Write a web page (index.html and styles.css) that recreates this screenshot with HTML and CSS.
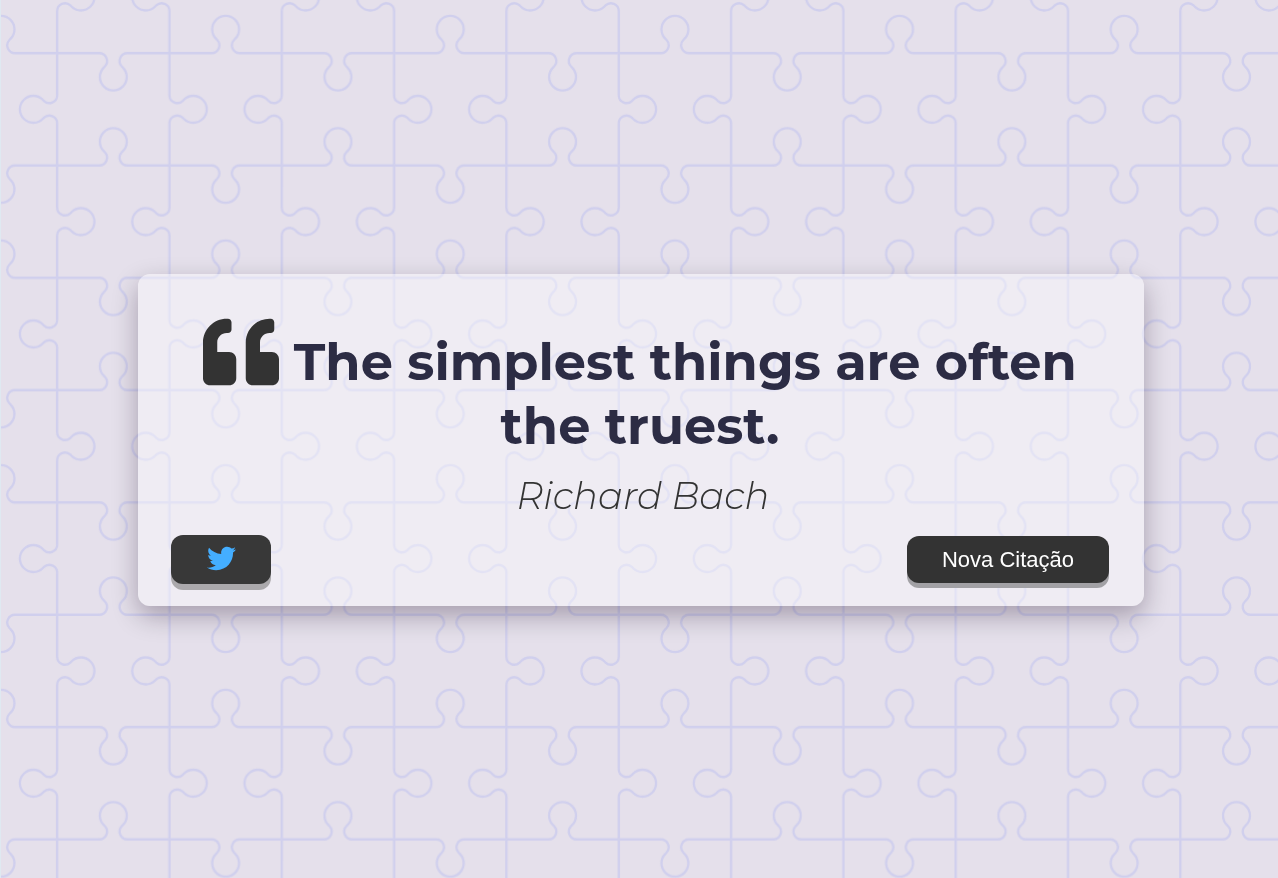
FILE: index.html
```
<!DOCTYPE html>
<html lang="pt-BR">
<head>
<meta charset="utf-8">
<meta name="viewport" content="width=device-width, initial-scale=1">
<title>Citações</title>
<link rel="stylesheet" href="styles.css">
</head>
<body>
<svg class="backdrop" aria-hidden="true">
  <defs>
    <path id="edge" d="M0-48V-12A6.7 6.7 0 0 1-11.3-7.2L-12.2-8.1A11.5 11.5 0 1 0-12.2 8.1L-11.3 7.2A6.7 6.7 0 0 1 0 12V48"/>
    <pattern id="jigsaw" width="192" height="192" patternUnits="userSpaceOnUse" patternTransform="translate(0 -3) scale(1.17)">
      <g class="jigsaw-line">
        <use href="#edge" transform="translate(48 96)"/>
        <use href="#edge" transform="translate(48 0) rotate(180)"/>
        <use href="#edge" transform="translate(48 192) rotate(180)"/>
        <use href="#edge" transform="translate(144 96) rotate(180)"/>
        <use href="#edge" transform="translate(144 0)"/>
        <use href="#edge" transform="translate(144 192)"/>
        <use href="#edge" transform="translate(96 48) rotate(-90)"/>
        <use href="#edge" transform="translate(0 48) rotate(90)"/>
        <use href="#edge" transform="translate(192 48) rotate(90)"/>
        <use href="#edge" transform="translate(96 144) rotate(90)"/>
        <use href="#edge" transform="translate(0 144) rotate(-90)"/>
        <use href="#edge" transform="translate(192 144) rotate(-90)"/>
      </g>
    </pattern>
  </defs>
  <rect width="100%" height="100%" fill="url(#jigsaw)"/>
</svg>
<main class="quote-card">
  <h1 class="quote-text"><svg class="quote-icon" viewBox="0 0 512 512" aria-hidden="true"><path d="M464 256h-80v-64c0-35.3 28.7-64 64-64h8c13.3 0 24-10.7 24-24V56c0-13.3-10.7-24-24-24h-8c-88.4 0-160 71.6-160 160v240c0 26.5 21.5 48 48 48h128c26.5 0 48-21.5 48-48V304c0-26.5-21.5-48-48-48zm-288 0H96v-64c0-35.3 28.7-64 64-64h8c13.3 0 24-10.7 24-24V56c0-13.3-10.7-24-24-24h-8C71.6 32 0 103.6 0 192v240c0 26.5 21.5 48 48 48h128c26.5 0 48-21.5 48-48V304c0-26.5-21.5-48-48-48z"/></svg> The simplest things are often the truest.</h1>
  <p class="quote-author">Richard Bach</p>
  <div class="actions">
    <button class="button button-twitter" type="button" aria-label="Twitter"><svg class="twitter-icon" viewBox="0 0 512 512" aria-hidden="true"><path d="M459.37 151.716c.325 4.548.325 9.097.325 13.645 0 138.72-105.583 298.558-298.558 298.558-59.452 0-114.68-17.219-161.137-47.106 8.447.974 16.568 1.299 25.34 1.299 49.055 0 94.213-16.568 130.274-44.832-46.132-.975-84.792-31.188-98.112-72.772 6.498.974 12.995 1.624 19.818 1.624 9.421 0 18.843-1.3 27.614-3.573-48.081-9.747-84.143-51.98-84.143-102.985v-1.299c13.969 7.797 30.214 12.67 47.431 13.319-28.264-18.843-46.781-51.005-46.781-87.391 0-19.492 5.197-37.36 14.294-52.954 51.655 63.675 129.3 105.258 216.365 109.807-1.624-7.797-2.599-15.918-2.599-24.04 0-57.828 46.782-104.934 104.934-104.934 30.213 0 57.502 12.67 76.67 33.137 23.715-4.548 46.456-13.32 66.599-25.34-7.798 24.366-24.366 44.833-46.132 57.827 21.117-2.273 41.584-8.122 60.426-16.243-14.292 20.791-32.161 39.308-52.628 54.253z"/></svg></button>
    <button class="button" type="button">Nova Citação</button>
  </div>
</main>
</body>
</html>
```
FILE: styles.css
```
* { box-sizing: border-box; }

body {
  margin: 0;
  min-height: 100vh;
  display: flex;
  align-items: center;
  border-left: 1px solid #dfe9f1;
  background: #e5e0eb;
  font-family: Montserrat, Inter, sans-serif;
}

.backdrop {
  position: fixed;
  inset: 0 0 0 1px;
  z-index: -1;
  width: 100%;
  height: 100%;
}

.jigsaw-line {
  fill: none;
  stroke: #d0cfed;
  stroke-width: 2;
}

.quote-card {
  flex: 1;
  margin: 2px 134px 0 137px;
  padding: 40px 35px 22px 33px;
  border-radius: 12px;
  background: rgba(255, 255, 255, 0.4);
  box-shadow: 0 10px 26px rgba(20, 0, 30, 0.3);
  text-align: center;
}

.quote-text {
  margin: 0;
  padding: 0 24px;
  color: #2c2c44;
  font-size: 51px;
  font-weight: 700;
  line-height: 64px;
}

.quote-icon {
  width: 76px;
  height: 76px;
  vertical-align: -10px;
  fill: #333;
}

.quote-author {
  margin: 14px 0 15px;
  padding-left: 6px;
  color: #333;
  font-size: 37px;
  font-style: italic;
  font-weight: 300;
  line-height: 48px;
}

.actions {
  display: flex;
  align-items: center;
  justify-content: space-between;
}

.button {
  height: 47px;
  padding: 0 35px;
  border: 0;
  border-radius: 12px;
  background: #333;
  box-shadow: 0 5px #a2a1a5;
  color: #fff;
  font: 22px "Liberation Sans", Arial, sans-serif;
  line-height: 44px;
  cursor: pointer;
}

.button-twitter {
  display: flex;
  align-items: center;
  justify-content: center;
  width: 100px;
  height: 49px;
  padding: 0 0 2px;
  background: #383838;
  box-shadow: 0 6px #aba9ac;
}

.twitter-icon {
  width: 29px;
  height: 29px;
  fill: #44aeff;
}
```
